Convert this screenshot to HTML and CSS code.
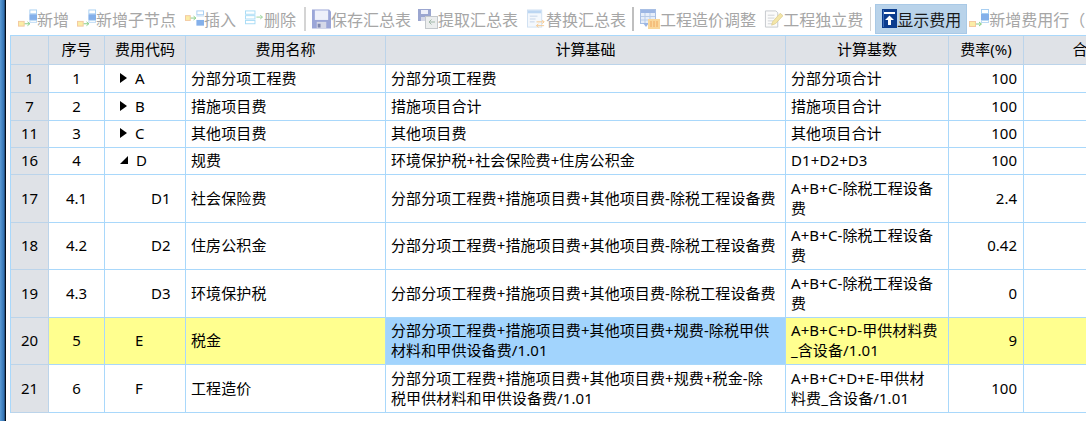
FILE: index.html
```html
<!DOCTYPE html>
<html lang="zh-CN">
<head>
<meta charset="utf-8">
<title>费用汇总</title>
<link rel="stylesheet" href="styles.css">
</head>
<body>
<svg class="defs" width="0" height="0" aria-hidden="true">
  <symbol id="i-add" viewBox="0 0 20 20">
    <rect x="12.5" y="0.5" width="7" height="4" fill="#fff" stroke="#a8cff2"/>
    <rect x="12" y="5" width="8" height="6" fill="#84b0ea"/>
    <rect x="12.5" y="11.5" width="7" height="2" fill="#fff" stroke="#bcdaf5"/>
    <rect x="0.5" y="12.5" width="6" height="5" fill="#fbeda6" stroke="#f3c9a0"/>
    <path d="M7 15h5M10 13l2.500 2-2.500 2" fill="none" stroke="#85cc85"/>
  </symbol>
  <symbol id="i-ins" viewBox="0 0 20 20">
    <rect x="12.500" y="1.500" width="7" height="4" fill="#fff" stroke="#a8cff2"/>
    <rect x="12" y="6" width="8" height="1.500" fill="#cfe4f8"/>
    <rect x="12" y="11" width="8" height="6" fill="#84b0ea"/>
    <rect x="0.500" y="6.500" width="5" height="5" fill="#fbeda6" stroke="#f3c9a0"/>
    <path d="M6 9h5M9 7l2.500 2-2.500 2" fill="none" stroke="#85cc85"/>
  </symbol>
  <symbol id="i-del" viewBox="0 0 20 20">
    <rect x="0.500" y="1.500" width="10" height="3.500" fill="#fff" stroke="#a8dcf6"/>
    <rect x="0.500" y="6.500" width="10" height="3.500" fill="#fff" stroke="#a8dcf6"/>
    <rect x="0.500" y="11.500" width="10" height="3.500" fill="#fff" stroke="#a8dcf6"/>
    <path d="M12 8h6M16 6l2.500 2-2.500 2" fill="none" stroke="#9bd39b"/>
  </symbol>
  <symbol id="i-save" viewBox="0 0 20 20">
    <path d="M0 0h18l2 2v18H0z" fill="#9ba6d8"/>
    <rect x="3" y="1" width="14" height="10" fill="#eef0fa"/>
    <rect x="5" y="13" width="10" height="7" fill="#d5d8e8"/>
    <rect x="6" y="15" width="3" height="4" fill="#8088b0"/>
  </symbol>
  <symbol id="i-get" viewBox="0 0 20 20">
    <path d="M0 0h13v12H0z" fill="#9ba6d0"/>
    <rect x="3" y="1" width="7" height="4" fill="#eef0fa"/>
    <rect x="3" y="8" width="7" height="4" fill="#d5d8e8"/>
    <rect x="7.500" y="7.500" width="12" height="12" fill="#eceeee" stroke="#c4c8cc"/>
    <path d="M17 13h-6M13.500 10.500L11 13l2.500 2.500" fill="none" stroke="#a0b8a8"/>
  </symbol>
  <symbol id="i-rep" viewBox="0 0 20 20">
    <rect x="0.500" y="0.500" width="15" height="18" fill="#f4f8fd" stroke="#cfe0f2"/>
    <rect x="1" y="1" width="14" height="3" fill="#bcd6f2"/>
    <path d="M3 7h8M3 10h6M3 13h5" stroke="#c4d4e8"/>
    <path d="M10 13h8M16 11l2 2-2 2M18 17h-8M12 15l-2 2 2 2" fill="none" stroke="#f5c88e"/>
  </symbol>
  <symbol id="i-cost" viewBox="0 0 20 20">
    <rect x="0.500" y="0.500" width="15" height="14" fill="#e6eefa" stroke="#a8bfe4"/>
    <rect x="1" y="1" width="14" height="3" fill="#9cb6e4"/>
    <path d="M5 4v10M10 4v10M1 7.500h14M1 11h14" stroke="#b8cbe8"/>
    <path d="M3 14h6l-3 4z" fill="#9cb6e4"/>
    <rect x="8" y="10" width="12" height="10" fill="#fad79a"/>
    <path d="M11 12v6M14 12v6M17 12v6" stroke="#f0a860"/>
  </symbol>
  <symbol id="i-doc" viewBox="0 0 20 20">
    <path d="M1.500 1.500h11l2 2v15h-13z" fill="#fbfbfb" stroke="#c4c8cc"/>
    <path d="M4 6h7M4 9h7M4 12h6M4 15h5" stroke="#cfd2d6"/>
    <path d="M9 13L17 4l3 2.500L12 15l-4 1.500z" fill="#f4e6a8" stroke="#d8c88a" stroke-width=".7"/>
  </symbol>
  <symbol id="i-show" viewBox="0 0 15 19">
    <rect width="15" height="19" fill="#0b3c8e"/>
    <rect x="1" y="1" width="1" height="17" fill="#3a6ab6"/>
    <rect x="2" y="3" width="11" height="2" fill="#fff"/>
    <path d="M7.500 6.500L3 11h3v5h3v-5h3z" fill="#fff"/>
  </symbol>
</svg>

<div class="strip"></div>
<main class="main">
  <div class="toolbar">
    <span class="tool"><svg class="ico"><use href="#i-add"/></svg>新增</span>
    <span class="tool"><svg class="ico"><use href="#i-add"/></svg>新增子节点</span>
    <span class="tool nudge-r"><svg class="ico"><use href="#i-ins"/></svg>插入</span>
    <span class="tool nudge-r"><svg class="ico"><use href="#i-del"/></svg>删除</span>
    <span class="sep"></span>
    <span class="tool"><svg class="ico"><use href="#i-save"/></svg>保存汇总表</span>
    <span class="tool nudge-l"><svg class="ico wide"><use href="#i-get"/></svg>提取汇总表</span>
    <span class="tool nudge-r"><svg class="ico"><use href="#i-rep"/></svg>替换汇总表</span>
    <span class="sep sep-dark"></span>
    <span class="tool"><svg class="ico wide"><use href="#i-cost"/></svg>工程造价调整</span>
    <span class="tool"><svg class="ico"><use href="#i-doc"/></svg>工程独立费</span>
    <span class="sep sep-thin"></span>
    <span class="tool active"><svg class="ico-show"><use href="#i-show"/></svg>显示费用</span>
    <span class="tool tail"><svg class="ico wide"><use href="#i-add"/></svg>新增费用行（</span>
  </div>

  <div class="grid">
    <div class="c h"></div><div class="c h">序号</div><div class="c h">费用代码</div><div class="c h">费用名称</div><div class="c h">计算基础</div><div class="c h">计算基数</div><div class="c h">费率(%)</div><div class="c h">合价</div>

    <div class="c n">1</div><div class="c m">1</div><div class="c t"><i class="tri"></i>A</div><div class="c l">分部分项工程费</div><div class="c l">分部分项工程费</div><div class="c l">分部分项合计</div><div class="c r">100</div><div class="c"></div>

    <div class="c n">7</div><div class="c m">2</div><div class="c t"><i class="tri"></i>B</div><div class="c l">措施项目费</div><div class="c l">措施项目合计</div><div class="c l">措施项目合计</div><div class="c r">100</div><div class="c"></div>

    <div class="c n">11</div><div class="c m">3</div><div class="c t"><i class="tri"></i>C</div><div class="c l">其他项目费</div><div class="c l">其他项目费</div><div class="c l">其他项目合计</div><div class="c r">100</div><div class="c"></div>

    <div class="c n">16</div><div class="c m">4</div><div class="c t"><i class="tri open"></i>D</div><div class="c l">规费</div><div class="c l">环境保护税+社会保险费+住房公积金</div><div class="c l">D1+D2+D3</div><div class="c r">100</div><div class="c"></div>

    <div class="c n">17</div><div class="c m">4.1</div><div class="c t sub">D1</div><div class="c l">社会保险费</div><div class="c l">分部分项工程费+措施项目费+其他项目费-除税工程设备费</div><div class="c l"><span>A+B+C-除税工程设备<br>费</span></div><div class="c r">2.4</div><div class="c"></div>

    <div class="c n">18</div><div class="c m">4.2</div><div class="c t sub">D2</div><div class="c l">住房公积金</div><div class="c l">分部分项工程费+措施项目费+其他项目费-除税工程设备费</div><div class="c l"><span>A+B+C-除税工程设备<br>费</span></div><div class="c r">0.42</div><div class="c"></div>

    <div class="c n">19</div><div class="c m">4.3</div><div class="c t sub">D3</div><div class="c l">环境保护税</div><div class="c l">分部分项工程费+措施项目费+其他项目费-除税工程设备费</div><div class="c l"><span>A+B+C-除税工程设备<br>费</span></div><div class="c r">0</div><div class="c"></div>

    <div class="c n">20</div><div class="c m y">5</div><div class="c t leaf y">E</div><div class="c l y">税金</div><div class="c l sel"><span>分部分项工程费+措施项目费+其他项目费+规费-除税甲供<br>材料和甲供设备费/1.01</span></div><div class="c l y"><span>A+B+C+D-甲供材料费<br>_含设备/1.01</span></div><div class="c r y">9</div><div class="c y"></div>

    <div class="c n">21</div><div class="c m">6</div><div class="c t leaf">F</div><div class="c l">工程造价</div><div class="c l"><span>分部分项工程费+措施项目费+其他项目费+规费+税金-除<br>税甲供材料和甲供设备费/1.01</span></div><div class="c l"><span>A+B+C+D+E-甲供材<br>料费_含设备/1.01</span></div><div class="c r">100</div><div class="c"></div>
  </div>
</main>
</body>
</html>
```
FILE: styles.css
```css
* { box-sizing: border-box; }
html, body { margin: 0; height: 100%; }
body {
  display: flex;
  width: 1086px;
  height: 421px;
  overflow: hidden;
  background: #fff;
  color: #000;
  font-family: "Noto Sans", "Noto Sans CJK SC", sans-serif;
  font-size: 15px;
}
.defs { position: absolute; }
.strip {
  flex: none;
  width: 6px;
  background: linear-gradient(to right, #5b9bd5 0, #2f6fb0 70%, #0b1a30 85%, #000 100%);
}
.main { flex: 1; min-width: 0; padding-left: 4px; overflow: hidden; }

.toolbar {
  display: flex;
  align-items: center;
  gap: 8px;
  height: 35px;
  padding: 4px 0 1px 8px;
  font-size: 16px;
  color: #a6a6a6;
  white-space: nowrap;
}
.tool { display: flex; align-items: center; flex: none; line-height: 30px; padding-top: 2px; }
.ico { width: 19px; height: 20px; flex: none; margin-top: -3px; }
.ico.wide { width: 20px; }
.ico-show { width: 15px; height: 19px; flex: none; margin-top: -3px; }
.nudge-r { margin-left: 1px; }
.nudge-l { margin-left: -1px; }
.sep { flex: none; width: 2px; height: 24px; background: #d4d4d4; margin-right: -2px; }
.sep-dark { background: #bfbfbf; margin-left: -2px; }
.sep-thin { width: 1px; margin: 0 -4px 0 -1px; }
.active {
  width: 92px;
  height: 30px;
  padding-left: 6px;
  color: #1a1a1a;
  background: #b9d3ea;
  border: 1px solid #a9c9e6;
}
.tail { margin-left: -6px; }

.grid {
  display: grid;
  grid-template-columns: 38px 56px 81px 200px 400px 163px 75px 128px;
  grid-template-rows: 29px 28px 28px 27px 27px 48px 47px 48px 47px 48px;
  width: 1146px;
  border-top: 1px solid #a9d8fb;
  border-left: 1px solid #a9d8fb;
  line-height: 20px;
}
.c {
  display: flex;
  align-items: center;
  min-width: 0;
  padding-bottom: 2px;
  border-right: 1px solid #a9d8fb;
  border-bottom: 1px solid #a9d8fb;
}
.h, .n {
  justify-content: center;
  background: #dfe2e7;
  border-color: #bcd4ea;
}
.m { justify-content: center; }
.l { padding-left: 5px; padding-right: 5px; letter-spacing: 0.1px; }
.r { justify-content: flex-end; padding-right: 6px; }
.t { padding-left: 15px; }
.sub { padding-left: 46px; }
.leaf { padding-left: 30px; }
.y { background: #ffff8f; }
.sel { background: #a2d4fd; }
.tri {
  flex: none;
  width: 0;
  height: 0;
  margin-right: 8px;
  border-left: 7px solid #000;
  border-top: 5px solid transparent;
  border-bottom: 5px solid transparent;
}
.tri.open {
  border-left: 8px solid transparent;
  border-top: 0;
  border-bottom: 8px solid #000;
}
```
